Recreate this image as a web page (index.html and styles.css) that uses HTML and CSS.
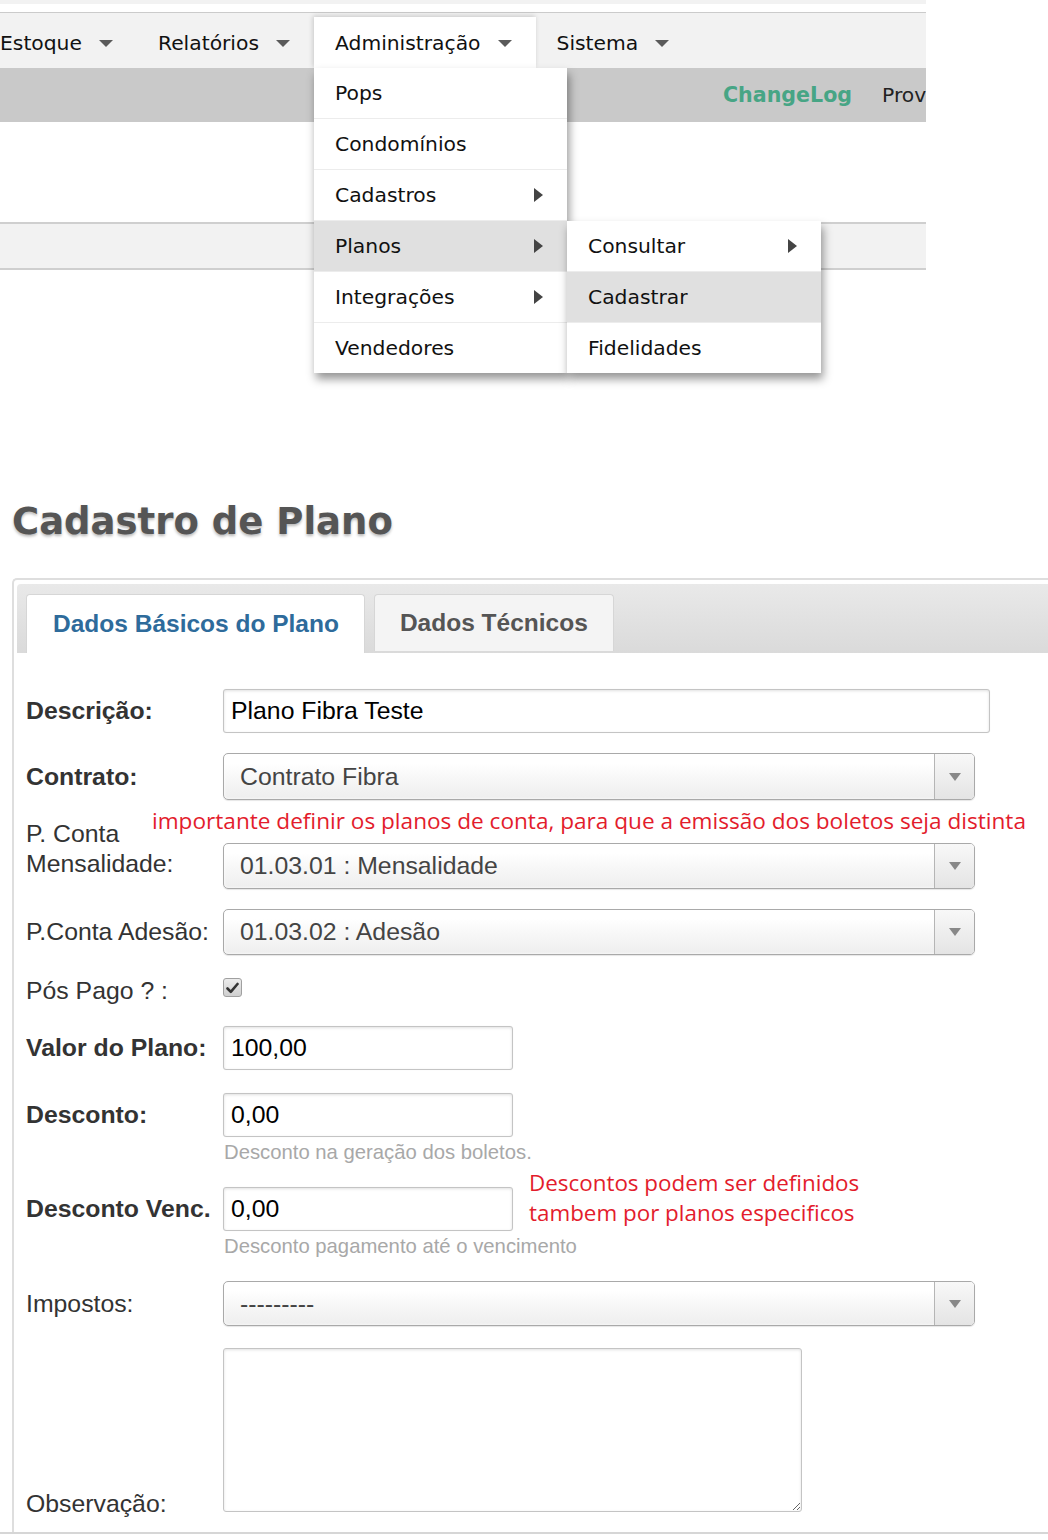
FILE: index.html
```html
<!DOCTYPE html>
<html lang="pt-BR">
<head>
<meta charset="utf-8">
<title>Cadastro de Plano</title>
<link rel="stylesheet" href="styles.css">
</head>
<body>
<header class="top">
  <div class="strip"></div>
  <nav class="nav">
    <ul class="menubar">
      <li class="mb-item first"><span>Estoque</span><i class="caret"></i></li>
      <li class="mb-item"><span>Relatórios</span><i class="caret"></i></li>
      <li class="mb-item open"><span>Administração</span><i class="caret"></i>
        <ul class="dropdown">
          <li class="dd-item"><span>Pops</span></li>
          <li class="dd-item"><span>Condomínios</span></li>
          <li class="dd-item"><span>Cadastros</span><i class="arrow"></i></li>
          <li class="dd-item active"><span>Planos</span><i class="arrow"></i>
            <ul class="dropdown sub">
              <li class="dd-item"><span>Consultar</span><i class="arrow"></i></li>
              <li class="dd-item active"><span>Cadastrar</span></li>
              <li class="dd-item"><span>Fidelidades</span></li>
            </ul>
          </li>
          <li class="dd-item"><span>Integrações</span><i class="arrow"></i></li>
          <li class="dd-item"><span>Vendedores</span></li>
        </ul>
      </li>
      <li class="mb-item"><span>Sistema</span><i class="caret"></i></li>
    </ul>
  </nav>
  <div class="toolbar"><span class="changelog">ChangeLog</span><span class="prov">Prov</span></div>
  <div class="blank"></div>
  <div class="subbar"></div>
</header>

<main class="page">
  <h1 class="title">Cadastro de Plano</h1>
  <section class="panel">
    <div class="tabs">
      <div class="tab active">Dados Básicos do Plano</div>
      <div class="tab">Dados Técnicos</div>
    </div>
    <form class="form">
      <div class="row">
        <label class="lbl b">Descrição:</label>
        <div class="inp wide">Plano Fibra Teste</div>
      </div>
      <div class="row">
        <label class="lbl b">Contrato:</label>
        <div class="chosen h47"><span class="chosen-text">Contrato Fibra</span><span class="chosen-btn"><i class="tri"></i></span></div>
      </div>
      <div class="note1">importante definir os planos de conta, para que a emissão dos boletos seja distinta</div>
      <div class="row">
        <label class="lbl top2">P. Conta Mensalidade:</label>
        <div class="chosen"><span class="chosen-text">01.03.01 : Mensalidade</span><span class="chosen-btn"><i class="tri"></i></span></div>
      </div>
      <div class="row">
        <label class="lbl">P.Conta Adesão:</label>
        <div class="chosen"><span class="chosen-text">01.03.02 : Adesão</span><span class="chosen-btn"><i class="tri"></i></span></div>
      </div>
      <div class="row">
        <label class="lbl tall">Pós Pago ? :</label>
        <span class="check"><svg width="13" height="12" viewBox="0 0 13 12"><path d="M1.5 6.5 L4.8 9.8 L11.5 2" fill="none" stroke="#333" stroke-width="2.6" stroke-linecap="round" stroke-linejoin="round"/></svg></span>
      </div>
      <div class="row mb23">
        <label class="lbl b">Valor do Plano:</label>
        <div class="inp short">100,00</div>
      </div>
      <div class="row">
        <label class="lbl b">Desconto:</label>
        <div class="inp short">0,00</div>
        <div class="help">Desconto na geração dos boletos.</div>
      </div>
      <div class="row">
        <label class="lbl b">Desconto Venc.</label>
        <div class="with-note">
          <div class="inp short">0,00</div>
          <div class="note2">Descontos podem ser definidos<br>tambem por planos especificos</div>
        </div>
        <div class="help">Desconto pagamento até o vencimento</div>
      </div>
      <div class="row mb22">
        <label class="lbl">Impostos:</label>
        <div class="chosen h45"><span class="chosen-text">---------</span><span class="chosen-btn"><i class="tri"></i></span></div>
      </div>
      <div class="row last">
        <label class="lbl bottom">Observação:</label>
        <textarea class="textarea"></textarea>
      </div>
    </form>
  </section>
</main>
<div class="footer-line"></div>
</body>
</html>
```

FILE: styles.css
```css
html, body {
  margin: 0;
  padding: 0;
  background: #fff;
}
body {
  overflow-x: hidden;
  font-family: "Liberation Sans", Arial, sans-serif;
  color: #333;
}

/* ---------- top navigation ---------- */
.top {
  width: 926px;
  font-family: "DejaVu Sans", Verdana, sans-serif;
  font-size: 20.3px;
  color: #111;
}
.strip {
  height: 4px;
  background: #f2f2f2;
  margin-bottom: 8px;
}
.nav {
  height: 55px;
  border-top: 1px solid #cbcbcb;
  background: #f2f2f2;
  position: relative;
  z-index: 5;
}
.menubar {
  list-style: none;
  margin: 0;
  padding: 0;
  height: 100%;
  display: flex;
  align-items: flex-end;
}
.mb-item {
  display: flex;
  align-items: center;
  gap: 17px;
  height: 51px;
  padding: 0 24px 0 21px;
  position: relative;
}
.mb-item.first {
  padding-left: 0;
}
.mb-item.open {
  background: #fff;
  box-shadow: -1px -1px 5px rgba(0, 0, 0, 0.18);
}
.caret {
  width: 0;
  height: 0;
  border-left: 7px solid transparent;
  border-right: 7px solid transparent;
  border-top: 7px solid #5a5a5a;
  margin-top: 2px;
}
.dropdown {
  list-style: none;
  margin: 0;
  padding: 0;
  position: absolute;
  top: 100%;
  left: 0;
  width: 253px;
  background: #fff;
  box-shadow: 2px 6px 9px rgba(0, 0, 0, 0.42);
  z-index: 10;
}
.dropdown.sub {
  top: 0;
  left: 100%;
  width: 254px;
}
.dd-item {
  display: flex;
  align-items: center;
  justify-content: space-between;
  height: 50px;
  padding: 0 24px 0 21px;
  border-bottom: 1px solid #ececec;
  position: relative;
  background: #fff;
}
.dd-item:last-child {
  border-bottom: none;
}
.dd-item.active {
  background: #e0e0e0;
}
.arrow {
  width: 0;
  height: 0;
  border-top: 7px solid transparent;
  border-bottom: 7px solid transparent;
  border-left: 9px solid #444;
}
.toolbar {
  height: 54px;
  background: #c9c9c9;
  display: flex;
  align-items: center;
  gap: 30px;
  padding-left: 723px;
  overflow: hidden;
  white-space: nowrap;
}
.changelog {
  font-weight: bold;
  font-size: 20.6px;
  color: #47a585;
}
.prov {
  color: #222;
}
.blank {
  height: 100px;
}
.subbar {
  height: 44px;
  background: #f2f2f2;
  border-top: 2px solid #cfcfcf;
  border-bottom: 2px solid #cfcfcf;
}

/* ---------- page ---------- */
.page {
  padding-left: 12px;
}
.title {
  margin: 230px 0 34px;
  font-family: "DejaVu Sans", Verdana, sans-serif;
  font-weight: bold;
  font-size: 37px;
  line-height: 44px;
  color: #555;
  text-shadow: 0 2px 3px rgba(0, 0, 0, 0.28);
}
.panel {
  margin-right: -40px;
  border: 2px solid #dedede;
  border-bottom: none;
  border-right: none;
  border-radius: 5px 0 0 0;
  padding: 4px 3px 0 3px;
}
.tabs {
  height: 59px;
  padding: 10px 0 0 9px;
  display: flex;
  align-items: flex-end;
  gap: 9px;
  border-radius: 4px 0 0 0;
  background: linear-gradient(#e9e9e9, #dadada);
}
.tab {
  height: 57px;
  margin-bottom: 2px;
  padding: 0 25px;
  display: flex;
  align-items: center;
  font-weight: bold;
  font-size: 24.5px;
  color: #555;
  background: #f4f4f4;
  border: 1px solid #d6d6d6;
  border-bottom: none;
  border-radius: 4px 4px 0 0;
  box-sizing: border-box;
}
.tab.active {
  height: 59px;
  margin-bottom: 0;
  padding: 0 25px 0 26px;
  background: #fff;
  color: #2e6b9b;
}

/* ---------- form ---------- */
.form {
  padding: 36px 12px 20px 9px;
  margin: 0;
}
.row {
  display: grid;
  grid-template-columns: 197px auto;
  justify-content: start;
  align-items: center;
  margin-bottom: 20px;
}
.row.mb23 { margin-bottom: 23px; }
.row.mb22 { margin-bottom: 22px; }
.row.last { margin-bottom: 0; }
.lbl {
  font-size: 24.8px;
  line-height: 30px;
  color: #333;
  white-space: nowrap;
}
.lbl.b {
  font-weight: bold;
}
.lbl.top2 {
  align-self: start;
  margin-top: -24px;
  white-space: normal;
  width: 150px;
}
.lbl.tall {
  line-height: 31px;
}
.lbl.bottom {
  align-self: end;
  margin-bottom: -7px;
}
.inp {
  box-sizing: border-box;
  height: 44px;
  display: flex;
  align-items: center;
  padding: 0 7px;
  border: 1px solid #c4c4c4;
  border-radius: 3px;
  box-shadow: inset 0 1px 3px rgba(0, 0, 0, 0.12), 0 0 1px rgba(0, 0, 0, 0.1);
  font-size: 24.8px;
  color: #000;
  background: #fff;
}
.inp.wide { width: 767px; }
.inp.short { width: 290px; }
.chosen {
  box-sizing: border-box;
  width: 752px;
  height: 46px;
  display: flex;
  align-items: stretch;
  border: 1px solid #a9a9a9;
  border-radius: 5px;
  background: linear-gradient(#fff 20%, #f7f7f7 55%, #eeeeee 100%);
  box-shadow: inset 0 0 3px #fff, 0 1px 1px rgba(0, 0, 0, 0.1);
  overflow: hidden;
}
.chosen.h47 { height: 47px; }
.chosen.h45 { height: 45px; }
.chosen-text {
  flex: 1;
  display: flex;
  align-items: center;
  padding-left: 16px;
  font-size: 24.8px;
  color: #444;
}
.chosen-btn {
  width: 39px;
  border-left: 1px solid #b5b5b5;
  background: linear-gradient(#f8f8f8, #e4e4e4);
  display: flex;
  align-items: center;
  justify-content: center;
}
.tri {
  width: 0;
  height: 0;
  border-left: 6px solid transparent;
  border-right: 6px solid transparent;
  border-top: 8px solid #888;
}
.check {
  align-self: start;
  margin-top: 3px;
  width: 19px;
  height: 19px;
  box-sizing: border-box;
  border: 1px solid #a0a0a0;
  border-radius: 3px;
  background: linear-gradient(#ececec, #cfcfcf);
  display: flex;
  align-items: center;
  justify-content: center;
}
.help {
  grid-column: 2;
  margin: 4px 0 4px 1px;
  font-size: 20.3px;
  line-height: 22px;
  color: #a8a8a8;
}
.with-note {
  display: flex;
  align-items: flex-start;
}
.note1 {
  margin: -14px 0 7px 126px;
  font-family: "Open Sans", sans-serif;
  font-size: 22.6px;
  line-height: 30px;
  color: #e31c2c;
  white-space: nowrap;
}
.note2 {
  margin: -19px 0 0 16px;
  font-family: "Open Sans", sans-serif;
  font-size: 22.4px;
  line-height: 30px;
  color: #e31c2c;
  white-space: nowrap;
}
.textarea {
  display: block;
  box-sizing: border-box;
  width: 579px;
  height: 164px;
  margin: 0;
  border: 1px solid #c4c4c4;
  border-radius: 3px;
  box-shadow: inset 0 1px 3px rgba(0, 0, 0, 0.12);
  background: #fff;
}
.footer-line {
  border-top: 2px solid #d6d6d6;
  height: 6px;
}
```
